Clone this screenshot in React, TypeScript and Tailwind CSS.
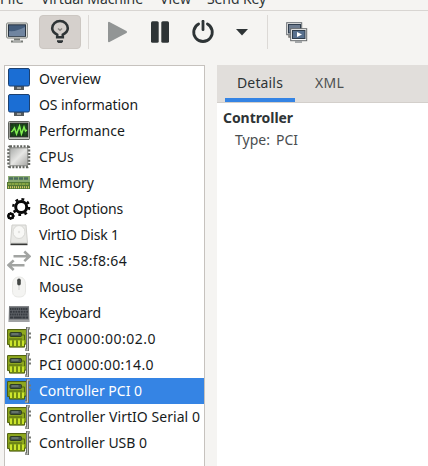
import React from "react";

function Monitor() {
  return (
    <svg width="24" height="24" viewBox="0 0 24 24">
      <path d="M7 19h10v4H7z" fill="#555a5c" />
      <path d="M10 21h4" stroke="#ddd" />
      <rect x="1.5" y="1.5" width="21" height="17.5" rx="1.5" fill="#1b6ed4" stroke="#1d4170" />
    </svg>
  );
}

function Performance() {
  return (
    <svg width="24" height="24" viewBox="0 0 24 24">
      <rect x="1.5" y="2.5" width="21" height="18" rx="1" fill="#c6c8c0" stroke="#60625d" />
      <rect x="3.2" y="4.2" width="17.6" height="13.6" fill="#163c15" stroke="#20251e" />
      <path d="M4 8h16M4 11h16M4 14h16M7 5v12M10 5v12M14 5v12M18 5v12" stroke="#276329" strokeWidth=".6" />
      <path d="M4 13l1.5-1 2-3 2 6 3-8 2 8 2.5-7 1.5 4 1.5-1" fill="none" stroke="#83ef51" strokeWidth="1.5" />
      <path d="M2 20.5h20" stroke="#60625d" />
    </svg>
  );
}

function Cpu() {
  return (
    <svg width="24" height="24" viewBox="0 0 24 24">
      <defs>
        <linearGradient id="chip" x1="0" y1="0" x2="1" y2="1">
          <stop stopColor="#a7a9a7" /><stop offset=".5" stopColor="#e6e6e4" /><stop offset="1" stopColor="#a5a5a2" />
        </linearGradient>
      </defs>
      <rect x="2" y="2" width="19.5" height="19.5" rx="1" fill="none" stroke="#62645f" strokeWidth="3.5" strokeDasharray="2 1.4" />
      <rect x="2.8" y="2.8" width="18" height="18" rx="1" fill="url(#chip)" stroke="#858783" />
    </svg>
  );
}

function Memory() {
  return (
    <svg width="24" height="24" viewBox="0 0 24 24">
      <rect x="1" y="5" width="22" height="6" fill="#8aab72" />
      <path d="M2 7.5h20" stroke="#4c6d60" strokeWidth="2.5" strokeDasharray="4 1" />
      <rect x="0" y="11" width="23" height="7" fill="#547936" />
      <path d="M1 13h21" stroke="#86a545" strokeWidth="2" strokeDasharray="3 .5" />
      <path d="M1 16.2h21" stroke="#d5c966" strokeWidth="2" strokeDasharray="1 1" />
    </svg>
  );
}

function Gears() {
  return (
    <svg width="24" height="24" viewBox="0 0 24 24" fill="none" stroke="#080808">
      <circle cx="14.2" cy="10" r="5.5" strokeWidth="3" />
      <circle cx="14.2" cy="10" r="7.9" strokeWidth="2.4" strokeDasharray="2.8 3.404" />
      <circle cx="3.7" cy="19" r="2.3" strokeWidth="2.5" />
      <path d="M3.7 15v1.5M3.7 21.5V23M0 19h1M7 19h1M1 16l1 1M6.5 21.5l-1-1M6.5 16l-1 1M1 22l1-1" />
    </svg>
  );
}

function Disk() {
  return (
    <svg width="24" height="24" viewBox="0 0 24 24">
      <path d="M5 2h14l1.5 18h-17z" fill="#e9e9e6" stroke="#d0d0cc" />
      <ellipse cx="12" cy="9" rx="6" ry="6.5" fill="#f8f8f6" stroke="#d8d8d5" />
      <circle cx="12" cy="9" r="1.2" fill="#e3e3e0" />
      <path d="M3.5 20.5h17v1.7h-17z" fill="#353735" />
    </svg>
  );
}

function Network() {
  return (
    <svg width="24" height="24" viewBox="0 0 24 24" fill="none" stroke="#a2a4a2" strokeWidth="2.6">
      <path d="M6.5 7.3H22M17.3 2.5l5.2 4.8-5.2 4.8M17.5 16.2H2M6.7 11.4l-5.2 4.8L6.7 21" />
    </svg>
  );
}

function Mouse() {
  return (
    <svg width="24" height="24" viewBox="0 0 24 24">
      <path d="M5.5 10c0-5 2-8 6.5-8s6.5 3 6.5 8v6c0 4-2 6-6.5 6s-6.5-2-6.5-6z" fill="#f4f4f2" stroke="#e8e8e5" />
      <rect x="10.2" y="3.5" width="3.6" height="7" rx="1.7" fill="#444745" />
      <path d="M12 11v4" stroke="#ccc" />
    </svg>
  );
}

function Keyboard() {
  return (
    <svg width="24" height="24" viewBox="0 0 24 24">
      <path d="M2 5h20l.5 16H1.5z" fill="#85878a" />
      <path d="M2.5 6h19v12h-19z" fill="#62666b" />
      <g stroke="#363a40" strokeWidth="1.9">
        <path d="M3 8h18M3 13.5h18" strokeDasharray="1.5 .7" />
        <path d="M3 10.7h18" strokeDasharray="2 .7" />
        <path d="M3 16.5h18" strokeDasharray="3 .7 8 .7" />
      </g>
      <path d="M2 20h20" stroke="#bbbcbd" />
    </svg>
  );
}

function PciCard() {
  return (
    <svg width="24" height="24" viewBox="0 0 24 24">
      <path d="M.6 2.6h19.5v14.5h-2.5v3H2.5v-2.5H.6z" fill="#84a018" stroke="#495906" />
      <path d="M1.2 3.2h17.5v9H1.2z" fill="#8fa820" />
      <rect x="3" y="5.5" width="11.5" height="4" rx="1" fill="#45534c" stroke="#26351e" strokeWidth=".9" />
      <path d="M4.5 7h7" stroke="#98a49b" strokeWidth=".8" />
      <path d="M2 12h13M14.5 8h3v5" fill="none" stroke="#526710" />
      <path d="M4 13.5V19M8 13.5V19M12 13.5V19M16 13.5V19" stroke="#cce52c" strokeWidth="2" />
      <path d="M6 13.5V19M10 13.5V19M14 13.5V19" stroke="#617711" />
      <path d="M23 1h-2.5v22H18" fill="none" stroke="#686b66" strokeWidth="3" />
      <path d="M23 1h-2.5v22H18" fill="none" stroke="#c2c4be" strokeWidth="1.1" />
      <path d="M22 6.5h2M22 10.5h2" stroke="#777a74" strokeWidth="2" />
    </svg>
  );
}

const rows = [
  { label: "Overview", Icon: Monitor, width: "w-[62px]" },
  { label: "OS information", Icon: Monitor, width: "w-[99px]" },
  { label: "Performance", Icon: Performance, width: "w-[86px]" },
  { label: "CPUs", Icon: Cpu, width: "w-[35px]" },
  { label: "Memory", Icon: Memory, width: "w-[55px]" },
  { label: "Boot Options", Icon: Gears, width: "w-[84px]" },
  { label: "VirtIO Disk 1", Icon: Disk, width: "w-[80px]" },
  { label: "NIC :58:f8:64", Icon: Network, width: "w-[88px]" },
  { label: "Mouse", Icon: Mouse, width: "w-[44px]" },
  { label: "Keyboard", Icon: Keyboard, width: "w-[62px]" },
  { label: "PCI 0000:00:02.0", Icon: PciCard, width: "w-[117px]" },
  { label: "PCI 0000:00:14.0", Icon: PciCard, width: "w-[115px]" },
  { label: "Controller PCI 0", Icon: PciCard, width: "w-[103px]", selected: true },
  { label: "Controller VirtIO Serial 0", Icon: PciCard, width: "w-[161px]" },
  { label: "Controller USB 0", Icon: PciCard, width: "w-[108px]" },
];

function Label({ text, width, className = "" }: { text: string; width: string; className?: string }) {
  const ref = React.useRef<HTMLSpanElement>(null);
  const [spacing, setSpacing] = React.useState(0);
  React.useLayoutEffect(() => {
    const el = ref.current;
    if (el && el.parentElement) {
      setSpacing((el.parentElement.clientWidth - el.getBoundingClientRect().width) / text.length);
    }
  }, [text]);
  return (
    <span className={`block shrink-0 whitespace-pre ${width} ${className}`}>
      <span ref={ref} style={{ letterSpacing: spacing }}>{text}</span>
    </span>
  );
}

function Toolbar() {
  return (
    <div className="flex h-[54px] items-start pt-1">
      <div className="mt-[6px] ml-[6px] w-[33px]">
        <svg width="23" height="24" viewBox="0 0 23 24">
          <rect x=".7" y="2" width="20.6" height="15" rx="1" fill="#f3f3ef" stroke="#777b76" />
          <rect x="2.5" y="3.8" width="17" height="11.5" fill="#435c7b" stroke="#27323f" />
          <path d="M3 10q7 1 16-4v9H3z" fill="#7085a0" />
          <path d="M8 17.5h6v2h3v2H5v-2h3z" fill="#777a76" />
          <path d="M7 20h8" stroke="#ddd" />
        </svg>
      </div>
      <button className="flex h-[34px] w-[42px] items-center justify-center rounded-[4px] border border-[#ccc7c2] bg-[#d5d0cc]">
        <svg width="22" height="26" viewBox="0 0 22 26">
          <path d="M8.2 18.2v-2.5C5 14 3.2 12 3.2 9.3a7.8 7.3 0 0 1 15.6 0c0 2.7-1.8 4.7-5 6.4v2.5z" fill="none" stroke="#2e3436" strokeWidth="2.6" />
          <path d="M9 9.5l2 1.7 2-1.7" fill="none" stroke="#898783" strokeWidth="1.5" />
          <path d="M8 21.3h6v1.5L12.7 24H9.3L8 22.8z" fill="#2e3436" />
        </svg>
      </button>
      <div className="ml-[7px] h-[34px] w-px bg-[#dcd9d6]" />
      <svg className="mt-[5px] ml-[18px]" width="22" height="24" viewBox="0 0 22 24">
        <path d="M2 2.8v18.4L19 12z" fill="#929595" stroke="#929595" strokeWidth="2" strokeLinejoin="round" />
      </svg>
      <svg className="mt-[5px] ml-[22px]" width="18" height="24" viewBox="0 0 18 24" fill="#2e3436">
        <rect x="0" y="1.3" width="7.7" height="21.5" rx="1.5" /><rect x="10.3" y="1.3" width="7.7" height="21.5" rx="1.5" />
      </svg>
      <svg className="mt-[5px] ml-[22px]" width="24" height="24" viewBox="0 0 24 24" fill="none" stroke="#2e3436" strokeWidth="2.8" strokeLinecap="round">
        <path d="M7.6 4a9.3 9.3 0 1 0 8.8 0" /><path d="M12 1.2v8.5" />
      </svg>
      <svg className="mt-[14px] ml-[21px]" width="12" height="7" viewBox="0 0 12 7"><path d="M0 0h12L6 6.5z" fill="#2e3436" /></svg>
      <div className="ml-[19px] h-[34px] w-px bg-[#dcd9d6]" />
      <svg className="mt-[6px] ml-[18px]" width="22" height="24" viewBox="0 0 22 24">
        <rect x=".7" y="1.7" width="15" height="12" fill="#eee" stroke="#666b70" /><rect x="2.5" y="3.5" width="12" height="8.5" fill="#6d7b8e" stroke="#303e4e" />
        <path d="M3 14v2h3" fill="none" stroke="#777" strokeWidth="1.5" />
        <rect x="4.7" y="7.7" width="16" height="12" fill="#fafafa" stroke="#66696c" /><rect x="6.5" y="9.5" width="12.5" height="8" fill="#58708e" stroke="#303d4b" />
        <path d="M11 11v5l5-2.5z" fill="#fff" /><path d="M9 20h7v2H9z" fill="#a4a7a9" />
      </svg>
    </div>
  );
}

export default function App() {
  return (
    <main className="flex h-[466px] w-[428px] flex-col overflow-hidden bg-[#f5f4f2] font-['Noto_Sans','Open_Sans',sans-serif] text-[14px] leading-5 text-[#2e3436]">
      <nav className="flex h-[11px] shrink-0 items-end overflow-hidden border-b border-[#d8d5d2] pb-px">
        <Label text="File" width="w-[24px]" />
        <Label text="Virtual Machine" width="w-[102px]" className="ml-[17px]" />
        <Label text="View" width="w-[31px]" className="ml-[17px]" />
        <Label text="Send Key" width="w-[59px]" className="ml-[16px]" />
      </nav>
      <Toolbar />
      <div className="flex min-h-0 flex-1 pl-1">
        <aside className="w-[201px] shrink-0 border-x border-t border-[#c6c2be] bg-white">
          {rows.map(({ label, Icon, width, selected }) => (
            <div key={label} className={`flex h-[26px] items-center pl-[2px] ${selected ? "bg-[#3584e4] text-white" : "text-[#171b1c]"}`}>
              <span className="mr-2 block h-6 w-6 shrink-0"><Icon /></span>
              <Label text={label} width={width} />
            </div>
          ))}
        </aside>
        <section className="ml-3 flex flex-1 flex-col bg-white">
          <div className="flex h-[38px] shrink-0 border-b border-[#d3cfcb] bg-[#e1dedb] pl-2">
            <div className="flex w-[70px] items-center justify-center border-b-[4px] border-[#3584e4] pt-[3px]">
              <Label text="Details" width="w-[46px]" />
            </div>
            <div className="flex w-[69px] items-center justify-center pb-px text-[#4d5152]">
              <Label text="XML" width="w-[29px]" />
            </div>
          </div>
          <div className="pt-[5px] pl-[6px]">
            <Label text="Controller" width="w-[70px]" className="font-bold" />
            <div className="mt-[2px] flex pl-3 text-[#4a4e50]">
              <Label text="Type:" width="w-[35px]" />
              <Label text="PCI" width="w-[22px]" className="ml-[6px]" />
            </div>
          </div>
        </section>
      </div>
    </main>
  );
}
